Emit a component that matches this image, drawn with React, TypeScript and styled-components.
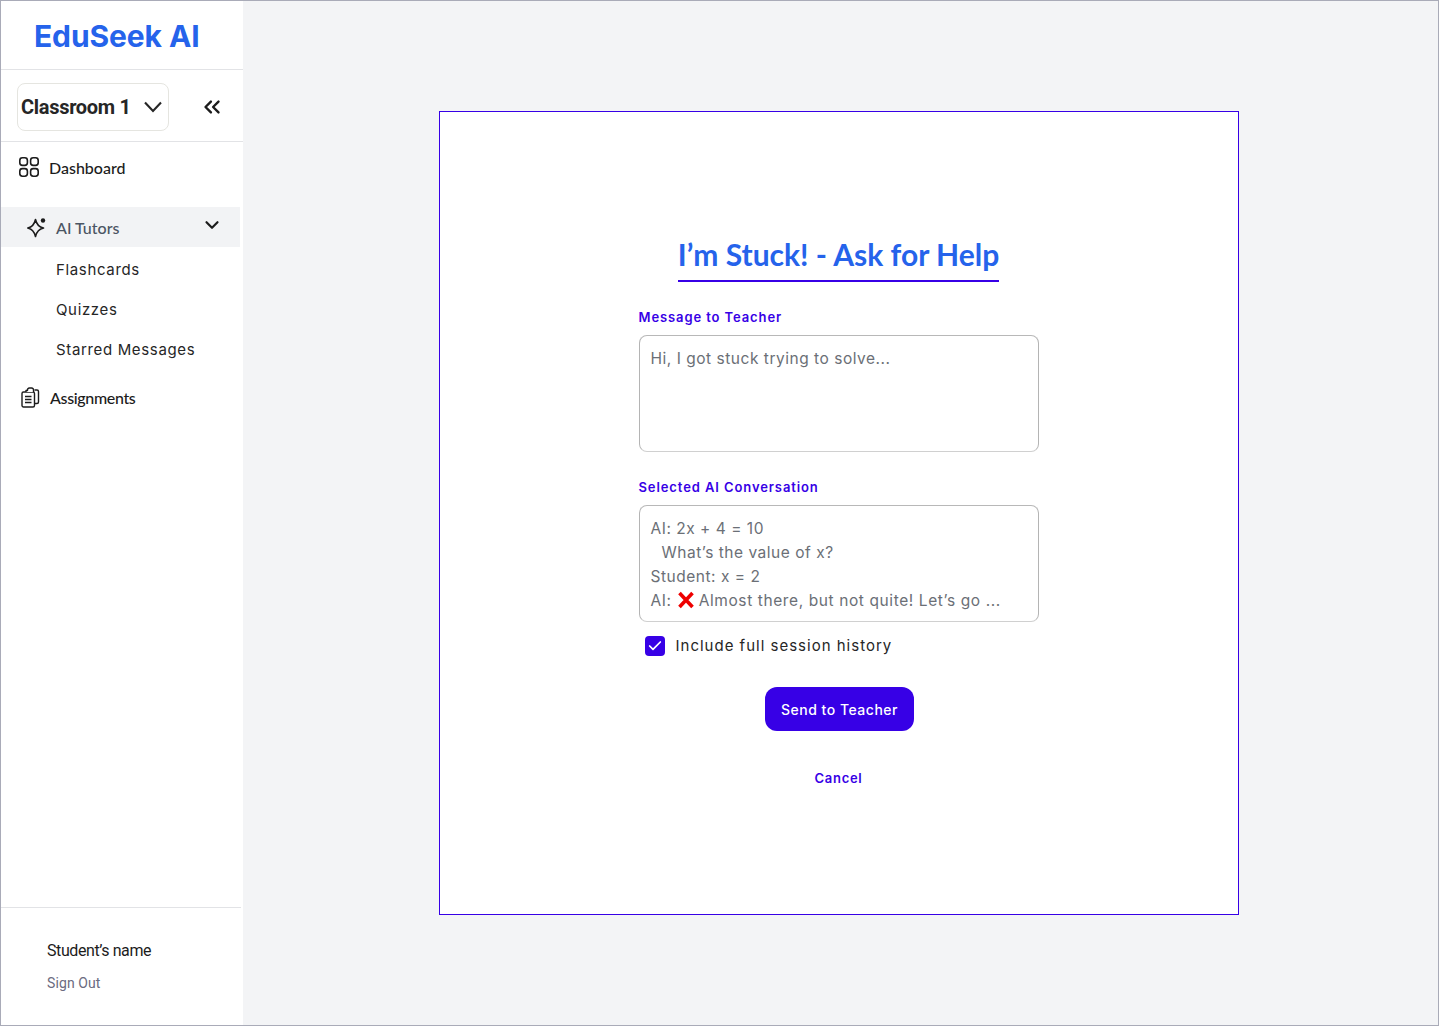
import React from "react";
import styled, { createGlobalStyle } from "styled-components";
import { Check, ChevronDown, ChevronsLeft } from "lucide-react";

const GlobalStyle = createGlobalStyle`
  html, body {
    margin: 0;
    padding: 0;
    background: #f3f4f6;
  }
  * {
    box-sizing: border-box;
  }
`;

const Frame = styled.div`
  display: flex;
  width: 1439px;
  height: 1026px;
  border: 1px solid #a9abb8;
  background: #f3f4f6;
  overflow: hidden;
`;

const Sidebar = styled.aside`
  display: flex;
  flex-direction: column;
  width: 242px;
  flex-shrink: 0;
  background: #fff;
`;

const LogoRow = styled.div`
  height: 69px;
  padding: 16px 0 0 33px;
  border-bottom: 1px solid #e2e3e6;
`;

const Logo = styled.div`
  font-family: Inter, sans-serif;
  font-weight: 700;
  font-size: 30px;
  line-height: 38px;
  letter-spacing: -0.1px;
  color: #2563eb;
`;

const ClassRow = styled.div`
  display: flex;
  align-items: center;
  height: 72px;
  padding: 2px 18px 0 16px;
  justify-content: space-between;
  border-bottom: 1px solid #e2e3e6;
`;

const ClassSelect = styled.div`
  display: flex;
  align-items: center;
  justify-content: space-between;
  width: 152px;
  height: 48px;
  padding: 0 5px 0 3px;
  border: 1px solid #e5e5e0;
  border-radius: 8px;
  font-family: Roboto, sans-serif;
  font-weight: 700;
  font-size: 20px;
  letter-spacing: -0.3px;
  color: #262626;
`;

const NavItem = styled.div<{ $top: number; $left: number; $tight?: boolean }>`
  display: flex;
  align-items: center;
  gap: 9px;
  margin-top: ${(p) => p.$top}px;
  padding-left: ${(p) => p.$left}px;
  height: 24px;
  font-family: Lato, sans-serif;
  font-weight: 500;
  font-size: 16px;
  letter-spacing: ${(p) => (p.$tight ? "-0.35px" : "0")};
  color: #1c1c1c;
`;

const ActiveRow = styled.div`
  display: flex;
  align-items: center;
  justify-content: space-between;
  width: 239px;
  height: 40px;
  margin-top: 28px;
  padding: 0 17px 4px 25px;
  background: #f2f3f5;
`;

const ActiveLabel = styled.div`
  display: flex;
  align-items: center;
  gap: 8px;
  font-family: Lato, sans-serif;
  font-weight: 500;
  font-size: 16px;
  color: #4b5563;
  padding-top: 4px;
`;

const SubItem = styled.div`
  height: 40px;
  padding-left: 55px;
  font-family: Inter, sans-serif;
  font-size: 15px;
  line-height: 46px;
  letter-spacing: 0.65px;
  color: #262626;
`;

const SidebarFoot = styled.div`
  margin-top: auto;
  width: 240px;
  height: 118px;
  padding: 32px 0 0 46px;
  border-top: 1px solid #e2e3e6;
`;

const StudentName = styled.div`
  font-family: Roboto, sans-serif;
  font-size: 16px;
  line-height: 22px;
  letter-spacing: -0.4px;
  color: #1c1c1c;
`;

const SignOut = styled.div`
  margin-top: 11px;
  font-family: Roboto, sans-serif;
  font-size: 14px;
  line-height: 20px;
  letter-spacing: 0.1px;
  color: #6b6b80;
`;

const Main = styled.main`
  flex: 1;
  display: flex;
  align-items: center;
  justify-content: center;
  padding-right: 4px;
`;

const Card = styled.section`
  display: flex;
  flex-direction: column;
  align-items: center;
  width: 800px;
  height: 804px;
  padding-top: 123px;
  background: #fff;
  border: 1px solid #3700e6;
`;

const Title = styled.h1`
  margin: 0;
  padding-bottom: 7px;
  border-bottom: 2px solid #3700e6;
  font-family: Lato, sans-serif;
  font-weight: 700;
  font-size: 30px;
  line-height: 38px;
  color: #2563eb;
`;

const Form = styled.div`
  display: flex;
  flex-direction: column;
  width: 400px;
  margin-top: 26px;
`;

const FieldLabel = styled.label<{ $top?: number }>`
  margin-top: ${(p) => p.$top ?? 0}px;
  margin-bottom: 9px;
  font-family: Inter, sans-serif;
  font-weight: 600;
  font-size: 13px;
  line-height: 18px;
  letter-spacing: 0.9px;
  color: #3700e6;
`;

const Field = styled.div`
  width: 400px;
  height: 117px;
  padding: 11px 11px;
  border: 1px solid #b4b4b4;
  border-bottom-color: #d0d0d0;
  border-top-color: #b8b8b8;
  border-radius: 8px;
  font-family: Inter, sans-serif;
  font-size: 15.5px;
  line-height: 24px;
  letter-spacing: 0.52px;
  color: #6b6f76;
  white-space: nowrap;
`;

const Indented = styled.div`
  padding-left: 11px;
`;

const LineWithIcon = styled.div`
  display: flex;
  align-items: center;
  gap: 5px;
  letter-spacing: 0.6px;
`;

const CheckRow = styled.div`
  display: flex;
  align-items: center;
  gap: 11px;
  margin: 14px 0 0 6px;
  font-family: Inter, sans-serif;
  font-size: 15px;
  line-height: 20px;
  letter-spacing: 1px;
  color: #262626;
`;

const CheckBox = styled.span`
  display: flex;
  align-items: center;
  justify-content: center;
  width: 20px;
  height: 20px;
  border-radius: 4px;
  background: #3700e6;
  color: #fff;
`;

const SendButton = styled.button`
  align-self: center;
  width: 149px;
  height: 44px;
  margin: 31px 0 0 2px;
  border: none;
  border-radius: 12px;
  background: #3700e6;
  color: #fff;
  font-family: Inter, sans-serif;
  font-weight: 500;
  font-size: 14px;
  letter-spacing: 0.5px;
`;

const CancelLink = styled.div`
  align-self: center;
  margin-top: 38px;
  font-family: Inter, sans-serif;
  font-weight: 600;
  font-size: 13px;
  line-height: 18px;
  letter-spacing: 0.7px;
  color: #3700e6;
`;

const DashboardIcon = () => (
  <svg width="22" height="22" viewBox="0 0 22 22" fill="none" stroke="#1c1c1c" strokeWidth="1.6">
    <rect x="1.8" y="1.8" width="7.6" height="7.6" rx="2.6" />
    <rect x="12.6" y="1.8" width="7.6" height="7.6" rx="2.6" />
    <rect x="1.8" y="12.6" width="7.6" height="7.6" rx="2.6" />
    <rect x="12.6" y="12.6" width="7.6" height="7.6" rx="2.6" />
  </svg>
);

const SparkleIcon = () => (
  <svg width="22" height="22" viewBox="0 0 22 22" fill="none" stroke="#1c1c1c" strokeWidth="1.6" strokeLinejoin="round">
    <path d="M9.500 3.500C10.500 8 12.500 11 17.500 12C12.500 13 10.500 16.500 9.500 20.500C8.500 16.500 6.500 13 1.800 12C6.500 11 8.500 8 9.500 3.500z" />
    <circle cx="17" cy="4.500" r="2.200" fill="#1c1c1c" stroke="none" />
  </svg>
);

const ClipboardIcon = () => (
  <svg width="20" height="21" viewBox="0 0 20 21" fill="none" stroke="#1c1c1c" strokeWidth="1.4" strokeLinejoin="round">
    <path d="M13.500 3h2.500a1.500 1.500 0 0 1 1.500 1.500V15a1.500 1.500 0 0 1-1.500 1.500h-2.500" />
    <rect x="1" y="5" width="12.500" height="15" rx="1.500" />
    <path d="M5 5V3.500h1.500a2 2 0 0 1 2-2.500h2a2 2 0 0 1 2 2.500V5" fill="#fff" />
    <path d="M4 9.500h6.500M4 12.500h6.500M4 15.500h6.500" />
  </svg>
);

const SelectChevron = () => (
  <svg width="20" height="14" viewBox="0 0 20 14" fill="none" stroke="#262626" strokeWidth="2.1">
    <path d="M2 2.500L10 11L18 2.500" />
  </svg>
);

const CrossMark = styled.svg`
  margin: 0 -1px 2px 0;
`;

const RedCross = () => (
  <CrossMark width="18" height="18" viewBox="0 0 18 18" stroke="#ee0000" strokeWidth="3.600" strokeLinecap="butt">
    <path d="M2.500 2l13 14M15.500 2l-13 14" />
  </CrossMark>
);

export default function App() {
  return (
    <>
      <GlobalStyle />
      <Frame>
        <Sidebar>
          <LogoRow>
            <Logo>EduSeek AI</Logo>
          </LogoRow>
          <ClassRow>
            <ClassSelect>
              Classroom 1
              <SelectChevron />
            </ClassSelect>
            <ChevronsLeft size={26} strokeWidth={2.2} color="#1c1c1c" />
          </ClassRow>
          <NavItem $top={13} $left={17}>
            <DashboardIcon />
            Dashboard
          </NavItem>
          <ActiveRow>
            <ActiveLabel>
              <SparkleIcon />
              AI Tutors
            </ActiveLabel>
            <ChevronDown size={22} strokeWidth={2.4} color="#1c1c1c" />
          </ActiveRow>
          <SubItem>Flashcards</SubItem>
          <SubItem>Quizzes</SubItem>
          <SubItem>Starred Messages</SubItem>
          <NavItem $top={18} $left={20} $tight>
            <ClipboardIcon />
            Assignments
          </NavItem>
          <SidebarFoot>
            <StudentName>Student’s name</StudentName>
            <SignOut>Sign Out</SignOut>
          </SidebarFoot>
        </Sidebar>
        <Main>
          <Card>
            <Title>I’m Stuck! - Ask for Help</Title>
            <Form>
              <FieldLabel>Message to Teacher</FieldLabel>
              <Field>Hi, I got stuck trying to solve...</Field>
              <FieldLabel $top={26}>Selected AI Conversation</FieldLabel>
              <Field>
                <div>AI: 2x + 4 = 10</div>
                <Indented>What’s the value of x?</Indented>
                <div>Student: x = 2</div>
                <LineWithIcon>
                  AI: <RedCross /> Almost there, but not quite! Let’s go ...
                </LineWithIcon>
              </Field>
              <CheckRow>
                <CheckBox>
                  <Check size={16} strokeWidth={2.6} />
                </CheckBox>
                Include full session history
              </CheckRow>
              <SendButton>Send to Teacher</SendButton>
              <CancelLink>Cancel</CancelLink>
            </Form>
          </Card>
        </Main>
      </Frame>
    </>
  );
}
